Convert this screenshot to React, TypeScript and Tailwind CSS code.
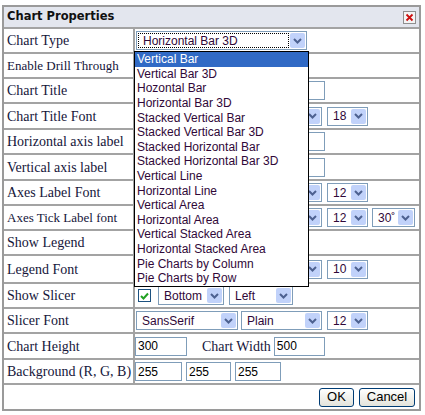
import React from "react";

const CHART_TYPES = [
  "Vertical Bar",
  "Vertical Bar 3D",
  "Hozontal Bar",
  "Horizontal Bar 3D",
  "Stacked Vertical Bar",
  "Stacked Vertical Bar 3D",
  "Stacked Horizontal Bar",
  "Stacked Horizontal Bar 3D",
  "Vertical Line",
  "Horizontal Line",
  "Vertical Area",
  "Horizontal Area",
  "Vertical Stacked Area",
  "Horizontal Stacked Area",
  "Pie Charts by Column",
  "Pie Charts by Row",
];

const sans = "font-['Liberation_Sans',Arial,sans-serif]";

function Arrow() {
  return (
    <span className="mr-[1px] flex h-[15px] w-[15px] shrink-0 items-center justify-center rounded-[2px] bg-[#c1d2fa]">
      <svg width="9" height="6" viewBox="0 0 9 6">
        <path d="M1 1l3.5 3.5L8 1" stroke="#4d6190" strokeWidth="2" fill="none" />
      </svg>
    </span>
  );
}

function Select({ value, className, focus }: { value?: string; className: string; focus?: boolean }) {
  return (
    <div className={`flex h-[19px] shrink-0 items-center border border-[#7f9db9] bg-white ${className}`}>
      <div
        className={`ml-[1px] mr-[1px] flex h-[15px] flex-1 items-center overflow-hidden whitespace-nowrap pl-[4px] text-[12px] text-[#300838] ${sans} ${
          focus ? "border border-dotted border-black" : ""
        }`}
      >
        {value}
      </div>
      <Arrow />
    </div>
  );
}

function Input({ value, className }: { value?: string; className: string }) {
  return (
    <div
      className={`flex h-[19px] shrink-0 items-center border border-[#7f9db9] bg-white pl-[2px] text-[12px] text-black ${sans} ${className}`}
    >
      {value}
    </div>
  );
}

// family + style selects sit under the open list except on the slicer row
function FontSelects({ size, rotate, shown }: { size: string; rotate?: string; shown?: boolean }) {
  return (
    <>
      <Select value={shown ? "SansSerif" : undefined} className="ml-[1px] w-[102px]" />
      <Select value={shown ? "Plain" : undefined} className="ml-[3px] w-[81px]" />
      <Select value={size} className="ml-[5px] w-[41px]" />
      {rotate && <Select value={rotate} className="ml-[4px] w-[43px]" />}
    </>
  );
}

function Row({
  label,
  h,
  small,
  children,
}: {
  label: string;
  h: string;
  small?: boolean;
  children?: React.ReactNode;
}) {
  return (
    <div className={`flex border-t-2 border-[#a3a3a3] ${h}`}>
      <div
        className={`flex w-[131px] shrink-0 items-center whitespace-nowrap border-r-2 border-[#a3a3a3] pl-[3px] text-[#15153a] font-['Liberation_Serif','Times_New_Roman',serif] ${
          small ? "text-[13px]" : "text-[14px]"
        }`}
      >
        {label}
      </div>
      <div className="flex flex-1 items-center">{children}</div>
    </div>
  );
}

function Checkbox() {
  return (
    <div className="ml-[3px] flex h-[13px] w-[13px] shrink-0 items-center justify-center border border-[#1c5180] bg-white">
      <svg width="9" height="8" viewBox="0 0 9 8">
        <path d="M1 4l2.5 2.5L8 1.5" stroke="#21a121" strokeWidth="2" fill="none" />
      </svg>
    </div>
  );
}

function Button({ label, className }: { label: string; className: string }) {
  return (
    <button
      className={`flex h-[19px] items-center justify-center rounded-[3px] border border-[#003c74] bg-gradient-to-b from-white to-[#e3e3db] text-[13px] text-black ${sans} ${className}`}
    >
      {label}
    </button>
  );
}

export default function App() {
  return (
    <div className="h-[415px] w-[425px] bg-white">
      <div className="relative ml-[2px] mt-[5px] w-[419px] border-2 border-[#9a9a9a]">
        {/* title bar */}
        <div className="flex h-[20px] items-center justify-between bg-[#e3e6ee] pl-[3px]">
          <span className="font-['DejaVu_Sans',Verdana,sans-serif] text-[11.5px] font-bold text-[#111]">
            Chart Properties
          </span>
          <div className="mr-[3px] flex h-[13px] w-[13px] items-center justify-center border border-[#8f8f8f] bg-[#f4f4f4]">
            <svg width="9" height="9" viewBox="0 0 9 9">
              <path d="M1.5 1.5l6 6M7.5 1.5l-6 6" stroke="#cc1010" strokeWidth="1.8" />
            </svg>
          </div>
        </div>

        <Row label="Chart Type" h="h-[25px]">
          <Select value="Horizontal Bar 3D" className="ml-[1px] w-[171px]" focus />
        </Row>
        <Row label="Enable Drill Through" h="h-[25px]" small />
        <Row label="Chart Title" h="h-[25px]">
          <Input className="ml-[1px] w-[189px]" />
        </Row>
        <Row label="Chart Title Font" h="h-[26px]">
          <FontSelects size="18" />
        </Row>
        <Row label="Horizontal axis label" h="h-[25px]">
          <Input className="ml-[1px] w-[189px]" />
        </Row>
        <Row label="Vertical axis label" h="h-[26px]">
          <Input className="ml-[1px] w-[189px]" />
        </Row>
        <Row label="Axes Label Font" h="h-[25px]">
          <FontSelects size="12" />
        </Row>
        <Row label="Axes Tick Label font" h="h-[25px]" small>
          <FontSelects size="12" rotate="30˚" />
        </Row>
        <Row label="Show Legend" h="h-[25px]" />
        <Row label="Legend Font" h="h-[28px]">
          <FontSelects size="10" />
        </Row>
        <Row label="Show Slicer" h="h-[25px]">
          <Checkbox />
          <Select value="Bottom" className="ml-[7px] w-[66px]" />
          <Select value="Left" className="ml-[5px] w-[64px]" />
        </Row>
        <Row label="Slicer Font" h="h-[25px]">
          <FontSelects size="12" shown />
        </Row>
        <Row label="Chart Height" h="h-[26px]">
          <Input value="300" className="w-[52px]" />
          <span className="ml-[15px] whitespace-nowrap text-[14px] text-[#15153a] font-['Liberation_Serif','Times_New_Roman',serif]">
            Chart Width
          </span>
          <Input value="500" className="ml-[3px] w-[51px]" />
        </Row>
        <Row label="Background (R, G, B)" h="h-[25px]">
          <Input value="255" className="w-[47px]" />
          <Input value="255" className="ml-[4px] w-[45px]" />
          <Input value="255" className="ml-[4px] w-[46px]" />
        </Row>
        <div className="flex h-[26px] items-center justify-end border-t-2 border-[#a3a3a3] pr-[4px]">
          <Button label="OK" className="w-[35px]" />
          <Button label="Cancel" className="ml-[5px] w-[56px]" />
        </div>

        {/* open dropdown list */}
        <div className={`absolute left-[130px] top-[44px] w-[175px] border border-black bg-white ${sans}`}>
          {CHART_TYPES.map((t, i) => (
            <div
              key={t}
              className={`flex h-[14.6px] items-center whitespace-nowrap pl-[2px] text-[12px] ${
                i === 0 ? "bg-[#316ac5] text-white" : "text-[#300838]"
              }`}
            >
              {t}
            </div>
          ))}
        </div>
      </div>
    </div>
  );
}
